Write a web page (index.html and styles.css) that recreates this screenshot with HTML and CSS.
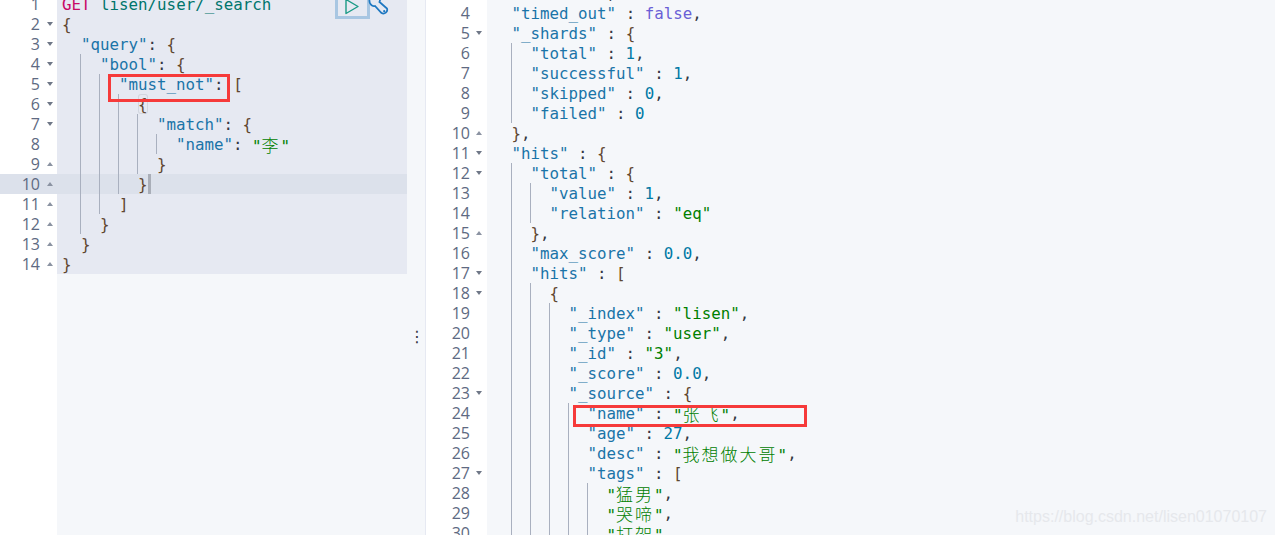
FILE: index.html
```html
<!DOCTYPE html>
<html lang="en">
<head>
<meta charset="utf-8">
<title>Console</title>
<link rel="stylesheet" href="styles.css">
</head>
<body>
<div class="console">
  <section class="pane pane-left">
    <div class="gutter gutter-left">
      <div class="num">1</div>
      <div class="num fold-down">2</div>
      <div class="num fold-down">3</div>
      <div class="num fold-down">4</div>
      <div class="num fold-down">5</div>
      <div class="num fold-down">6</div>
      <div class="num fold-down">7</div>
      <div class="num">8</div>
      <div class="num fold-up">9</div>
      <div class="num fold-up active-num">10</div>
      <div class="num fold-up">11</div>
      <div class="num fold-up">12</div>
      <div class="num fold-up">13</div>
      <div class="num fold-up">14</div>
    </div>
    <div class="code code-left">
      <div class="selected">
        <div class="line"><span class="verb">GET</span> <span class="url">lisen/user/_search</span></div>
        <div class="line"><span class="p">{</span></div>
        <div class="line"><i class="in"></i><span class="k">"query"</span><span class="c">:</span> <span class="p">{</span></div>
        <div class="line"><i class="in"></i><i class="in g"></i><span class="k">"bool"</span><span class="c">:</span> <span class="p">{</span></div>
        <div class="line"><i class="in"></i><i class="in g"></i><i class="in g"></i><span class="k">"must_not"</span><span class="c">:</span> <span class="p">[</span></div>
        <div class="line"><i class="in"></i><i class="in g"></i><i class="in g"></i><i class="in g"></i><span class="p match-brace">{</span></div>
        <div class="line"><i class="in"></i><i class="in g"></i><i class="in g"></i><i class="in g"></i><i class="in g"></i><span class="k">"match"</span><span class="c">:</span> <span class="p">{</span></div>
        <div class="line"><i class="in"></i><i class="in g"></i><i class="in g"></i><i class="in g"></i><i class="in g"></i><i class="in g"></i><span class="k">"name"</span><span class="c">:</span> <span class="s">"<span class="cjk">李</span>"</span></div>
        <div class="line"><i class="in"></i><i class="in g"></i><i class="in g"></i><i class="in g"></i><i class="in g"></i><span class="p">}</span></div>
        <div class="line line-active"><i class="in"></i><i class="in g"></i><i class="in g"></i><i class="in g"></i><span class="p cursor">}</span></div>
        <div class="line"><i class="in"></i><i class="in g"></i><i class="in g"></i><span class="p">]</span></div>
        <div class="line"><i class="in"></i><i class="in g"></i><span class="p">}</span></div>
        <div class="line"><i class="in"></i><span class="p">}</span></div>
        <div class="line"><span class="p">}</span></div>
      </div>
    </div>
    <div class="actions">
      <div class="play">
        <svg width="16" height="17" viewBox="0 0 16 17"><path d="M1 1.5 L1 15.5 L13 8.5 Z" fill="none" stroke="#1a9a86" stroke-width="1.4" stroke-linejoin="round"/></svg>
      </div>
      <svg class="wrench" width="22" height="18" viewBox="0 0 22 18"><path d="M1.500 0 C1 3.500 4 7 7 6 L13.500 13 A3.800 3.800 0 0 0 19 8.500 L11.500 2 C12 1 12 0 12 -1" fill="none" stroke="#1f78c1" stroke-width="1.800"/><circle cx="16.200" cy="11.200" r="1.100" fill="#1f78c1"/></svg>
    </div>
    <div class="mark mark-left"></div>
  </section>

  <div class="resizer"><span class="dots">⋮</span></div>

  <section class="pane pane-right">
    <div class="gutter gutter-right">
      <div class="num">3</div>
      <div class="num">4</div>
      <div class="num fold-down">5</div>
      <div class="num">6</div>
      <div class="num">7</div>
      <div class="num">8</div>
      <div class="num">9</div>
      <div class="num fold-up">10</div>
      <div class="num fold-down">11</div>
      <div class="num fold-down">12</div>
      <div class="num">13</div>
      <div class="num">14</div>
      <div class="num fold-up">15</div>
      <div class="num">16</div>
      <div class="num fold-down">17</div>
      <div class="num fold-down">18</div>
      <div class="num">19</div>
      <div class="num">20</div>
      <div class="num">21</div>
      <div class="num">22</div>
      <div class="num fold-down">23</div>
      <div class="num">24</div>
      <div class="num">25</div>
      <div class="num">26</div>
      <div class="num fold-down">27</div>
      <div class="num">28</div>
      <div class="num">29</div>
      <div class="num">30</div>
    </div>
    <div class="code code-right">
      <div class="line"><i class="in"></i><span class="k">"took"</span> <span class="c">:</span> <span class="n">2</span><span class="c">,</span></div>
      <div class="line"><i class="in"></i><span class="k">"timed_out"</span> <span class="c">:</span> <span class="b">false</span><span class="c">,</span></div>
      <div class="line"><i class="in"></i><span class="k">"_shards"</span> <span class="c">:</span> <span class="p">{</span></div>
      <div class="line"><i class="in"></i><i class="in g"></i><span class="k">"total"</span> <span class="c">:</span> <span class="n">1</span><span class="c">,</span></div>
      <div class="line"><i class="in"></i><i class="in g"></i><span class="k">"successful"</span> <span class="c">:</span> <span class="n">1</span><span class="c">,</span></div>
      <div class="line"><i class="in"></i><i class="in g"></i><span class="k">"skipped"</span> <span class="c">:</span> <span class="n">0</span><span class="c">,</span></div>
      <div class="line"><i class="in"></i><i class="in g"></i><span class="k">"failed"</span> <span class="c">:</span> <span class="n">0</span></div>
      <div class="line"><i class="in"></i><span class="p">}</span><span class="c">,</span></div>
      <div class="line"><i class="in"></i><span class="k">"hits"</span> <span class="c">:</span> <span class="p">{</span></div>
      <div class="line"><i class="in"></i><i class="in g"></i><span class="k">"total"</span> <span class="c">:</span> <span class="p">{</span></div>
      <div class="line"><i class="in"></i><i class="in g"></i><i class="in g"></i><span class="k">"value"</span> <span class="c">:</span> <span class="n">1</span><span class="c">,</span></div>
      <div class="line"><i class="in"></i><i class="in g"></i><i class="in g"></i><span class="k">"relation"</span> <span class="c">:</span> <span class="s">"eq"</span></div>
      <div class="line"><i class="in"></i><i class="in g"></i><span class="p">}</span><span class="c">,</span></div>
      <div class="line"><i class="in"></i><i class="in g"></i><span class="k">"max_score"</span> <span class="c">:</span> <span class="n">0.0</span><span class="c">,</span></div>
      <div class="line"><i class="in"></i><i class="in g"></i><span class="k">"hits"</span> <span class="c">:</span> <span class="p">[</span></div>
      <div class="line"><i class="in"></i><i class="in g"></i><i class="in g"></i><span class="p">{</span></div>
      <div class="line"><i class="in"></i><i class="in g"></i><i class="in g"></i><i class="in g"></i><span class="k">"_index"</span> <span class="c">:</span> <span class="s">"lisen"</span><span class="c">,</span></div>
      <div class="line"><i class="in"></i><i class="in g"></i><i class="in g"></i><i class="in g"></i><span class="k">"_type"</span> <span class="c">:</span> <span class="s">"user"</span><span class="c">,</span></div>
      <div class="line"><i class="in"></i><i class="in g"></i><i class="in g"></i><i class="in g"></i><span class="k">"_id"</span> <span class="c">:</span> <span class="s">"3"</span><span class="c">,</span></div>
      <div class="line"><i class="in"></i><i class="in g"></i><i class="in g"></i><i class="in g"></i><span class="k">"_score"</span> <span class="c">:</span> <span class="n">0.0</span><span class="c">,</span></div>
      <div class="line"><i class="in"></i><i class="in g"></i><i class="in g"></i><i class="in g"></i><span class="k">"_source"</span> <span class="c">:</span> <span class="p">{</span></div>
      <div class="line"><i class="in"></i><i class="in g"></i><i class="in g"></i><i class="in g"></i><i class="in g"></i><span class="k">"name"</span> <span class="c">:</span> <span class="s">"<span class="cjk">张飞</span>"</span><span class="c">,</span></div>
      <div class="line"><i class="in"></i><i class="in g"></i><i class="in g"></i><i class="in g"></i><i class="in g"></i><span class="k">"age"</span> <span class="c">:</span> <span class="n">27</span><span class="c">,</span></div>
      <div class="line"><i class="in"></i><i class="in g"></i><i class="in g"></i><i class="in g"></i><i class="in g"></i><span class="k">"desc"</span> <span class="c">:</span> <span class="s">"<span class="cjk">我想做大哥</span>"</span><span class="c">,</span></div>
      <div class="line"><i class="in"></i><i class="in g"></i><i class="in g"></i><i class="in g"></i><i class="in g"></i><span class="k">"tags"</span> <span class="c">:</span> <span class="p">[</span></div>
      <div class="line"><i class="in"></i><i class="in g"></i><i class="in g"></i><i class="in g"></i><i class="in g"></i><i class="in g"></i><span class="s">"<span class="cjk">猛男</span>"</span><span class="c">,</span></div>
      <div class="line"><i class="in"></i><i class="in g"></i><i class="in g"></i><i class="in g"></i><i class="in g"></i><i class="in g"></i><span class="s">"<span class="cjk">哭啼</span>"</span><span class="c">,</span></div>
      <div class="line"><i class="in"></i><i class="in g"></i><i class="in g"></i><i class="in g"></i><i class="in g"></i><i class="in g"></i><span class="s">"<span class="cjk">打架</span>"</span></div>
    </div>
    <div class="mark mark-right"></div>
    <div class="watermark">https://blog.csdn.net/lisen01070107</div>
  </section>
</div>
</body>
</html>
```

FILE: styles.css
```css
html, body {
  margin: 0;
  height: 535px;
  overflow: hidden;
  background: #fff;
}

.console {
  display: flex;
  height: 535px;
  overflow: hidden;
  font-family: "DejaVu Sans Mono", "Noto Sans CJK SC", monospace;
  font-size: 15.8px;
  line-height: 20px;
}

.pane {
  position: relative;
  display: flex;
  align-items: flex-start;
  height: 535px;
  background: #f5f7fa;
}

.pane-left { width: 407px; flex: none; }
.pane-right { flex: 1; min-width: 0; }

.gutter {
  flex: none;
  background: #fff;
  min-height: 600px;
  color: #5e6a82;
  font-family: "Open Sans", "Noto Sans", sans-serif;
  font-size: 16px;
}

.gutter-left { width: 57px; margin-top: -6px; }
.gutter-right { width: 61px; margin-top: -17px; }

.num {
  position: relative;
  box-sizing: border-box;
  height: 20px;
  padding-top: 1px;
  padding-right: 17px;
  line-height: 19px;
  text-align: right;
}

.active-num { background: #dce1eb; }

.fold-down::after,
.fold-up::after {
  content: "";
  position: absolute;
  right: 4px;
  width: 0;
  height: 0;
  border-left: 3.500px solid transparent;
  border-right: 3.500px solid transparent;
}

.gutter-right .fold-down::after,
.gutter-right .fold-up::after { right: 5px; }

.fold-down::after { top: 8px; border-top: 4px solid #6f7787; }
.fold-up::after { top: 8px; border-bottom: 4px solid #8b93a2; }

.code { flex: 1; min-width: 0; }
.code-left { margin-top: -6px; }
.code-right { margin-top: -17px; padding-left: 5.500px; }

.selected { background: #e6e9f2; }
.code-left .line { padding-left: 5px; }

.line { display: flex; height: 20px; white-space: pre; }
.line-active { background: #dce1eb; }

.line > span {
  box-sizing: border-box;
  height: 20px;
  padding-top: 1px;
  line-height: 19px;
  white-space: pre;
}

.in {
  display: block;
  flex: none;
  box-sizing: border-box;
  width: 19px;
  height: 20px;
}

.in.g {
  margin-left: -1px;
  margin-right: 1px;
  border-left: 1px solid #a9b0bf;
}

.verb { color: #c80a68; }
.url { color: #00756c; margin-left: 9.500px; }
.k { color: #1a74a8; }
.c { color: #343741; }
.p { color: #5f4630; }
.s { color: #008000; }
.n { color: #0079a5; }
.b { color: #6a5fd6; }

.line > .c + .p,
.line > .c + .s,
.line > .c + .n,
.line > .c + .b,
.line > .k + .c { margin-left: 9.500px; }

.code-left .line > .k + .c { margin-left: 0; }

.cjk {
  font-family: "Noto Sans CJK SC", sans-serif;
  font-size: 17px;
  font-weight: 300;
  letter-spacing: 2px;
}

.match-brace {
  box-shadow: inset 0 0 0 1px #d2d6df;
  border-radius: 3px;
}

.cursor { border-right: 3px solid #a9aeb8; }

.actions {
  position: absolute;
  left: 335px;
  top: -6px;
  display: flex;
  align-items: flex-start;
}

.play {
  box-sizing: border-box;
  display: flex;
  align-items: center;
  justify-content: center;
  width: 35px;
  height: 25px;
  border: 3px solid #a8c6e2;
}

.wrench { margin-left: -2px; margin-top: 6px; }

.mark {
  position: absolute;
  box-sizing: border-box;
  border: 3px solid #f63a3a;
}

.mark-left { left: 108px; top: 74px; width: 122px; height: 28px; }
.mark-right { left: 147px; top: 405px; width: 234px; height: 22px; }

.resizer {
  position: relative;
  flex: none;
  box-sizing: border-box;
  width: 19px;
  height: 535px;
  background: #f5f7fa;
  border-right: 1px solid #e6e9f2;
}

.dots {
  position: absolute;
  left: 2px;
  top: 327px;
  color: #343741;
  font-family: "DejaVu Sans", sans-serif;
  font-size: 16px;
}

.watermark {
  position: absolute;
  right: 8px;
  top: 507px;
  color: #e6e8ec;
  font-family: "Liberation Sans", sans-serif;
  font-size: 16px;
  line-height: 20px;
}
```
